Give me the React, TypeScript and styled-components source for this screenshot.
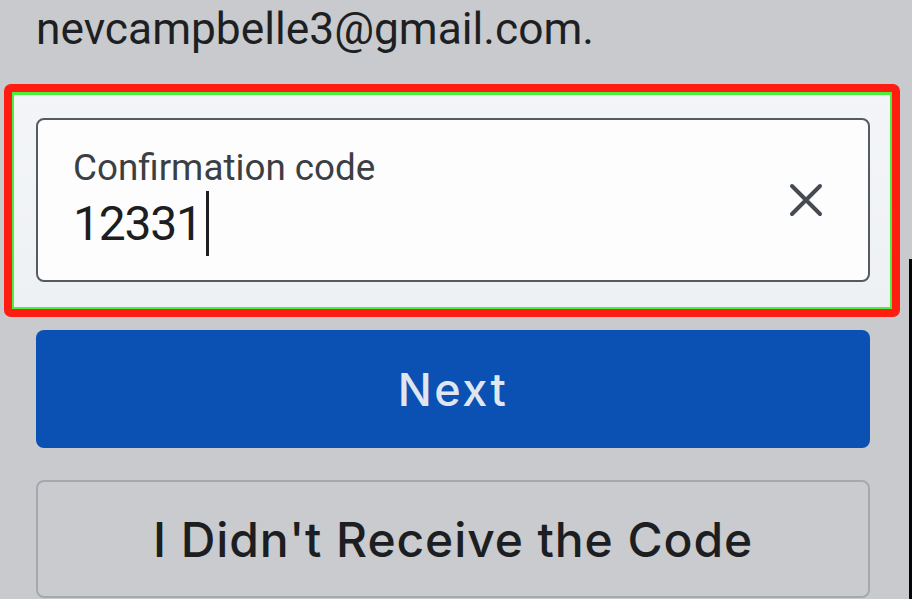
import React from "react";
import styled, { createGlobalStyle } from "styled-components";

const Global = createGlobalStyle`
  html, body {
    margin: 0;
    padding: 0;
  }
  body {
    width: 912px;
    height: 599px;
    overflow: hidden;
    background-color: #c8cacd;
    background-image: linear-gradient(#050505, #050505);
    background-size: 3px 340px;
    background-position: right bottom;
    background-repeat: no-repeat;
    font-family: Roboto, "Liberation Sans", sans-serif;
  }
`;

const Page = styled.div`
  display: flex;
  flex-direction: column;
  padding: 4px 42px 0 36px;
`;

const Email = styled.div`
  font-family: Roboto, "Liberation Sans", sans-serif;
  font-size: 44.3px;
  line-height: 50px;
  color: #1d1f22;
  white-space: nowrap;
`;

const Highlight = styled.div`
  margin: 30px -30px 0 -32px;
  border: 8px solid #ff1c10;
  border-radius: 7px;
`;

const HighlightInner = styled.div`
  border: 2px solid #4cf03c;
  border-top-width: 3px;
  padding: 23px 20px 25px 22px;
  background: linear-gradient(180deg, #f3f5f8 0%, #eef1f4 100%);
`;

const Field = styled.div`
  height: 160px;
  border: 2px solid #565b61;
  border-radius: 8px;
  background: #fdfdfe;
  display: flex;
  align-items: center;
  padding: 0 45px 0 35px;
`;

const FieldText = styled.div`
  flex: 1;
  display: flex;
  flex-direction: column;
  gap: 8px;
`;

const Label = styled.div`
  font-family: Roboto, "Liberation Sans", sans-serif;
  font-size: 36.8px;
  line-height: 40px;
  color: #3b3f44;
`;

const ValueRow = styled.div`
  display: flex;
  align-items: center;
  height: 56px;
`;

const Value = styled.span`
  font-family: Roboto, "Liberation Sans", sans-serif;
  font-size: 48px;
  line-height: 56px;
  font-weight: 400;
  letter-spacing: -1.2px;
  color: #1c1e21;
`;

const Caret = styled.span`
  display: inline-block;
  width: 3px;
  height: 65px;
  margin: -5px 0 -4px 4px;
  background: #1c1e21;
`;

const ClearIcon = styled.svg`
  width: 34px;
  height: 34px;
  flex: none;
`;

const Button = styled.div<{ $primary?: boolean }>`
  display: flex;
  align-items: center;
  justify-content: center;
  box-sizing: border-box;
  border-radius: 8px;
  font-family: Inter, Roboto, sans-serif;
  font-weight: 500;
  white-space: nowrap;
  ${(p) =>
    p.$primary
      ? `
    margin-top: 13px;
    height: 118px;
    background: #0a51b3;
    color: #dfe6ef;
    font-size: 45px;
    letter-spacing: 2.5px;
  `
      : `
    margin-top: 32px;
    height: 118px;
    border: 2px solid #a5a8ad;
    background: #c9cbcf;
    color: #1c1e21;
    font-size: 48px;
    letter-spacing: 0.9px;
  `}
`;

export default function App() {
  return (
    <>
      <Global />
      <Page>
        <Email>nevcampbelle3@gmail.com.</Email>
        <Highlight>
          <HighlightInner>
            <Field>
              <FieldText>
                <Label>Confirmation code</Label>
                <ValueRow>
                  <Value>12331</Value>
                  <Caret />
                </ValueRow>
              </FieldText>
              <ClearIcon viewBox="0 0 34 34">
                <path
                  d="M3 3 L31 31 M31 3 L3 31"
                  stroke="#464b51"
                  strokeWidth="4"
                  strokeLinecap="round"
                  fill="none"
                />
              </ClearIcon>
            </Field>
          </HighlightInner>
        </Highlight>
        <Button $primary>Next</Button>
        <Button>I Didn't Receive the Code</Button>
      </Page>
    </>
  );
}
